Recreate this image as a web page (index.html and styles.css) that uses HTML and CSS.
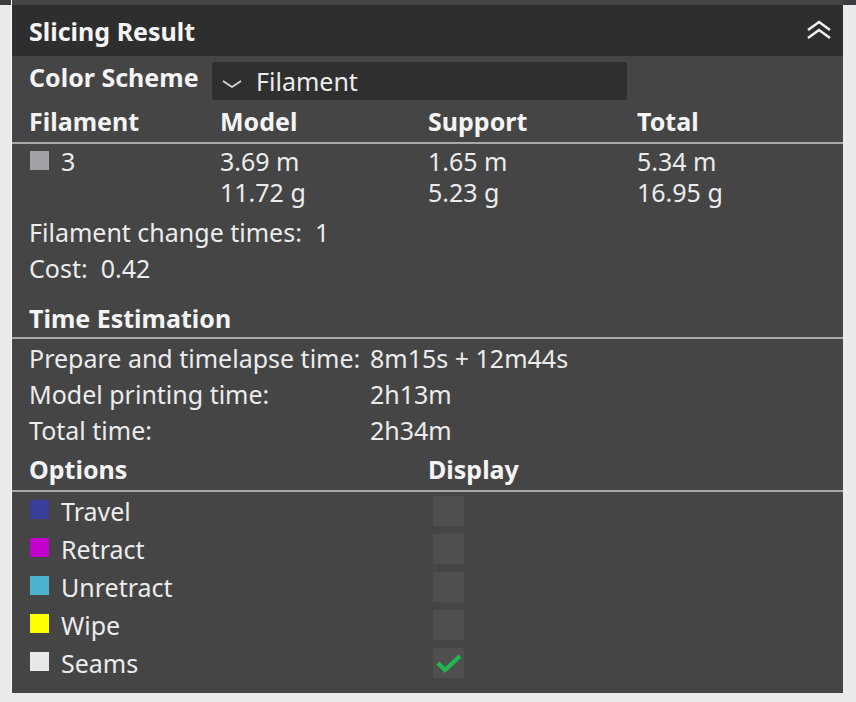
FILE: index.html
```html
<!DOCTYPE html>
<html lang="en">
  <head>
    <meta charset="UTF-8" />
    <meta name="viewport" content="width=device-width, initial-scale=1.0" />
    <title>Slicing Result</title>
    <link rel="stylesheet" href="styles.css">
  </head>
  <body>
    <div class="top-strip"></div>
    <div class="panel">
      <div class="panel-header">
        <span class="panel-title">Slicing Result</span>
        <!-- collapse button -->
        <svg class="collapse" width="26" height="20" viewBox="0 0 26 20">
          <polyline points="2,10 13,2 24,10" fill="none" stroke="#f2f2f2" stroke-width="2.4" />
          <polyline points="2,18 13,10 24,18" fill="none" stroke="#f2f2f2" stroke-width="2.4" />
        </svg>
      </div>

      <div class="scheme-row">
        <span class="bold">Color Scheme</span>
        <div class="dropdown">
          <svg class="dropdown-arrow" width="20" height="10" viewBox="0 0 20 10">
            <polyline points="1,2 10,8 19,2" fill="none" stroke="#dcdcdc" stroke-width="1.6" />
          </svg>
          <span>Filament</span>
        </div>
      </div>

      <div class="grid-head filament-cols">
        <span>Filament</span>
        <span>Model</span>
        <span>Support</span>
        <span>Total</span>
      </div>
      <div class="filament-cols filament-data">
        <div class="filament-id"><i class="swatch" style="background:#a3a3a7"></i>3</div>
        <div>3.69 m<br>11.72 g</div>
        <div>1.65 m<br>5.23 g</div>
        <div>5.34 m<br>16.95 g</div>
      </div>
      <div class="stat-line">Filament change times:&nbsp; 1</div>
      <div class="stat-line">Cost:&nbsp; 0.42</div>

      <div class="section-head">Time Estimation</div>
      <div class="time-rows">
        <span>Prepare and timelapse time:</span><span>8m15s + 12m44s</span>
        <span>Model printing time:</span><span>2h13m</span>
        <span>Total time:</span><span>2h34m</span>
      </div>

      <div class="grid-head options-cols">
        <span>Options</span>
        <span>Display</span>
      </div>
      <div class="legend" id="legend"></div>
    </div>

    <script>
      // Toolpath legend entries and their visibility
      const options = [
        { name: 'Travel', color: '#383f9a', shown: false },
        { name: 'Retract', color: '#c400cc', shown: false },
        { name: 'Unretract', color: '#4bb3cf', shown: false },
        { name: 'Wipe', color: '#ffff00', shown: false },
        { name: 'Seams', color: '#e8e8e8', shown: true }
      ];

      const tick = '<svg width="26" height="22" viewBox="0 0 26 22"><polyline points="2,11 9,18 24,4" fill="none" stroke="#1fb84e" stroke-width="4.2" /></svg>';

      const legend = document.getElementById('legend');
      options.forEach(opt => {
        const row = document.createElement('div');
        row.className = 'options-cols legend-row';

        const label = document.createElement('div');
        label.className = 'legend-label';
        label.innerHTML = `<i class="swatch" style="background:${opt.color}"></i>${opt.name}`;

        const box = document.createElement('div');
        box.className = 'check';
        box.innerHTML = opt.shown ? tick : '';
        box.addEventListener('click', () => {
          opt.shown = !opt.shown;
          box.innerHTML = opt.shown ? tick : '';
        });

        row.appendChild(label);
        row.appendChild(box);
        legend.appendChild(row);
      });
    </script>
  </body>
</html>
```

FILE: styles.css
```css
body {
  margin: 0;
  padding: 0;
  background: #ebebeb;
  font-family: "Noto Sans", "Open Sans", sans-serif;
  font-size: 25px;
  color: #ececec;
}
.top-strip {
  height: 5px;
  background: #3b3d41;
}
.panel {
  margin-left: 12px;
  margin-top: -5px;
  width: 831px;
  height: 693px;
  box-sizing: border-box;
  padding-top: 5px;
  background: #454545;
  box-shadow: -1px 0 0 #fafafa, 0 1px 0 #3a3a3a;
}
.panel-header {
  height: 51px;
  background: #2e2e2e;
  display: flex;
  align-items: center;
  justify-content: space-between;
  padding: 0 11px 0 17px;
}
.panel-title {
  font-weight: bold;
  color: #f4f4f4;
}
.collapse {
  margin-top: -2px;
}
.bold {
  font-weight: bold;
  color: #f4f4f4;
}
.scheme-row {
  display: flex;
  align-items: center;
  padding: 6px 0 0 17px;
  height: 38px;
}
.scheme-row .bold {
  margin-top: -8px;
  width: 183px;
}
.dropdown {
  width: 415px;
  height: 38px;
  background: #2f2f2f;
  border-radius: 3px;
  display: flex;
  align-items: center;
  box-sizing: border-box;
  padding-left: 10px;
}
.dropdown-arrow {
  margin-right: 14px;
  margin-top: 6px;
}
.filament-cols {
  display: grid;
  grid-template-columns: 191px 208px 209px 1fr;
  padding-left: 17px;
}
.options-cols {
  display: grid;
  grid-template-columns: 399px 1fr;
  padding-left: 17px;
}
.grid-head {
  height: 42px;
  line-height: 42px;
  font-weight: bold;
  color: #f4f4f4;
  border-bottom: 2px solid #a9a9a9;
}
.filament-data {
  padding-top: 2px;
  line-height: 31px;
}
.filament-id {
  display: flex;
  align-items: flex-start;
}
.filament-id .swatch {
  margin-top: 5px;
}
.swatch {
  display: inline-block;
  width: 19px;
  height: 19px;
  margin: 0 12px 0 1px;
}
.stat-line {
  padding-left: 17px;
  line-height: 36px;
}
.filament-data + .stat-line {
  margin-top: 6px;
}
.section-head {
  margin-top: 13px;
  padding-left: 17px;
  height: 38px;
  line-height: 38px;
  font-weight: bold;
  color: #f4f4f4;
  border-bottom: 2px solid #a9a9a9;
}
.time-rows {
  display: grid;
  grid-template-columns: 341px 1fr;
  padding: 1px 0 0 17px;
  line-height: 36px;
}
.legend-row {
  height: 38px;
  align-items: center;
}
.legend-label {
  display: flex;
  align-items: center;
}
.legend-label .swatch {
  margin-top: -3px;
}
.check {
  margin-left: 5px;
  width: 31px;
  height: 30px;
  background: #4f4f4f;
  display: flex;
  align-items: center;
  justify-content: center;
  cursor: pointer;
}
```
